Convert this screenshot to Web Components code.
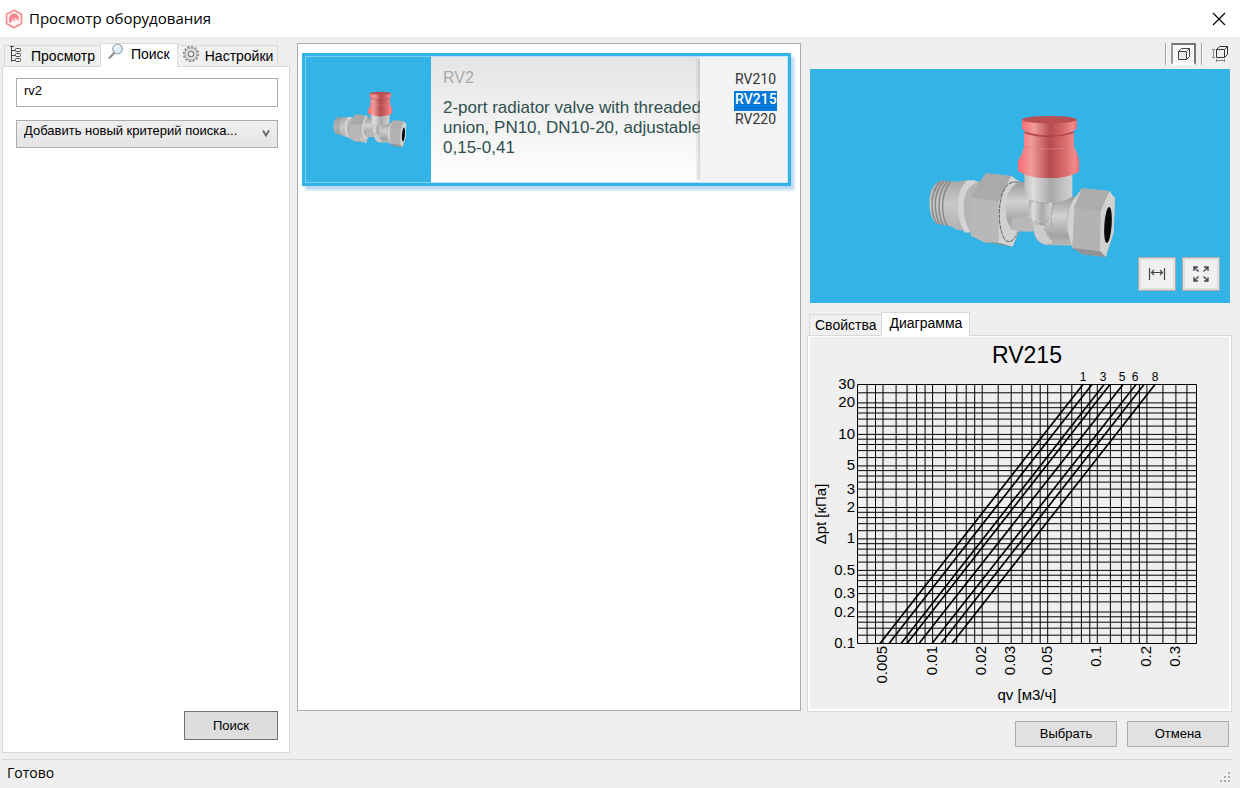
<!DOCTYPE html>
<html lang="ru">
<head>
<meta charset="utf-8">
<title>Просмотр оборудования</title>
<style>
  body { margin: 0; font: 14px/20px "Liberation Sans", Arial, sans-serif; color: #000; background: #efefef; }
</style>
</head>
<body>
<equipment-browser></equipment-browser>

<template id="t-browser">
  <style>
    :host { display: flex; flex-direction: column; min-height: 100vh; }
    main { flex: 1; display: grid; grid-template-columns: 288px minmax(0, 1fr) 425px; column-gap: 6px; padding: 6px 8px 6px 2px; }
    .search { display: flex; flex-direction: column; flex: 1; padding: 11px 11px 12px 13px; }
    .search input, .search select {
      box-sizing: border-box; width: 100%; height: 29px; margin: 0 0 13px; padding: 0 7px 5px; border: 1px solid #abadb3;
      font: 13px/20px "Liberation Sans", Arial, sans-serif; color: #000; border-radius: 0; outline: 0; background: #fff; }
    .search select { appearance: none; height: 28px; padding: 0 7px 6px; border-color: #acacac; background: linear-gradient(#efefef, #e4e4e4); }
    .drop { display: grid; }
    .drop > * { grid-area: 1 / 1; }
    .drop svg { justify-self: end; margin: 9px 8px 0 0; pointer-events: none; }
    dialog-button.find { align-self: flex-end; margin-top: auto; --w: 94px; --h: 29px; --line: #707070; --fill: #ddd; }
    .results { box-sizing: border-box; margin: 0 0 42px 1px; padding: 9px 9px 9px 4px; background: #fff; border: 1px solid #abadb3; }
    .side { display: flex; flex-direction: column; }
    view-tools { align-self: flex-end; }
    model-preview { margin: 0 2px 9px 3px; }
    .chart { background: #efefef; border: 2px solid #fff; border-width: 1px 2px 2px; flex: 1; }
    .actions { display: flex; justify-content: flex-end; gap: 10px; padding: 9px 3px 6px 0; --w: 102px; --h: 26px; }
    tab-box.detail { flex: 1; }
  </style>
  <title-bar>Просмотр оборудования</title-bar>
  <main>
    <tab-box active="1">
      <span slot="tab0"><svg width="14" height="18" viewBox="0 0 14 18" fill="none" stroke="#444"><path d="M1.500 1v15.500M0 1.500h4M2 5.500h3M2 10.500h3M2 15.500h3"/><rect x="5.500" y="3.500" width="5" height="3" rx="1"/><rect x="5.500" y="8.500" width="5" height="3" rx="1"/><rect x="5.500" y="13.500" width="5" height="3" rx="1"/></svg></span>
      <span slot="label0">Просмотр</span>
      <span slot="tab1"><svg width="16" height="17" viewBox="0 0 16 17"><path d="M1 15.500L6.500 9.500" stroke="#8b8b8b" stroke-width="2.200"/><circle cx="9.500" cy="6" r="4.800" fill="#d8ecfa" stroke="#a2a9b0" stroke-width="1.300"/><path d="M7 6a3 3 0 0 1 4-3" stroke="#fff" stroke-width="1.500" fill="none"/></svg></span>
      <span slot="label1">Поиск</span>
      <span slot="tab2"><svg width="18" height="18" viewBox="0 0 18 18"><circle cx="9" cy="9" r="7.300" fill="#e6e6e6" stroke="#858585" stroke-width="1.600" stroke-dasharray="2.200 1.600"/><circle cx="9" cy="9" r="6" fill="#e3e3e3" stroke="#a4a4a4"/><circle cx="9" cy="9" r="2.700" fill="#f6f6f6" stroke="#858585" stroke-width="1.300"/></svg></span>
      <span slot="label2">Настройки</span>
      <div class="search">
        <input type="text" value="rv2" aria-label="Текст для поиска">
        <div class="drop">
          <select aria-label="Критерий поиска"><option>Добавить новый критерий поиска...</option></select>
          <svg width="8" height="9" viewBox="0 0 8 9"><path d="M1 1.500L4 6.500L7 1.500" fill="none" stroke="#666" stroke-width="1.800"/></svg>
        </div>
        <dialog-button class="find">Поиск</dialog-button>
      </div>
    </tab-box>
    <div class="results">
      <product-card>
        <span slot="name">RV2</span>
        <span slot="text">2-port radiator valve with threaded<br>union, PN10, DN10-20, adjustable<br>0,15-0,41</span>
      </product-card>
    </div>
    <div class="side">
      <view-tools></view-tools>
      <model-preview></model-preview>
      <tab-box class="detail" active="1">
        <span slot="label0">Свойства</span>
        <span slot="label1">Диаграмма</span>
        <div class="chart"><pressure-chart></pressure-chart></div>
      </tab-box>
      <div class="actions">
        <dialog-button>Выбрать</dialog-button>
        <dialog-button>Отмена</dialog-button>
      </div>
    </div>
  </main>
  <status-bar>Готово</status-bar>
</template>

<template id="t-title">
  <style>
    :host { display: flex; align-items: center; height: 37px; padding: 0 14px 0 5px; background: #fff; font: 15px/20px "Open Sans", "Noto Sans", sans-serif; }
    span { flex: 1; padding: 0 0 2px 6px; }
    button { display: flex; border: 0; background: none; padding: 0; }
  </style>
  <svg width="18" height="20" viewBox="0 0 18 20"><path d="M9 1.300L16.500 5.300V14.500L9 18.700L1.500 14.500V5.300Z" fill="#fff3f3" stroke="#f58e92" stroke-width="1.700" stroke-linejoin="round"/><path d="M4 14V9.500A5 5 0 0 1 14 9.500V10.500L12 11A2.600 2.600 0 0 0 9.500 9L10 12H8.500L8 9.500Q6.500 11 6.500 13Z" fill="#f4888d"/></svg>
  <span><slot></slot></span>
  <button aria-label="Закрыть"><svg width="14" height="14" viewBox="0 0 14 14"><path d="M1 1L13 13M13 1L1 13" stroke="#000" stroke-width="1.200"/></svg></button>
</template>

<template id="t-button">
  <style>
    :host { display: block; }
    button { box-sizing: border-box; width: var(--w); height: var(--h); padding: 0; border: 1px solid var(--line, #adadad); background: var(--fill, #e1e1e1); font: 13px/20px "Liberation Sans", Arial, sans-serif; color: #000; }
  </style>
  <button type="button"><slot></slot></button>
</template>

<template id="t-status">
  <style>
    :host { display: flex; justify-content: space-between; align-items: center; height: 28px; margin: 0 8px 0 2px; padding-left: 5px; border-top: 1px solid #d7d7d7; font: 14px/20px "Open Sans", "Noto Sans", sans-serif; }
    svg { margin-top: 8px; }
    span { padding-bottom: 2px; }
  </style>
  <span><slot></slot></span>
  <svg width="12" height="12" viewBox="0 0 12 12" fill="#aaa"><path d="M8 0h2v2H8zM4 4h2v2H4zM8 4h2v2H8zM0 8h2v2H0zM4 8h2v2H4zM8 8h2v2H8z"/></svg>
</template>

<template id="t-tools">
  <style>
    :host { display: flex; align-items: flex-start; height: 26px; }
    i { width: 1px; height: 22px; background: #a0a0a0; box-shadow: 1px 0 #fff; }
    button { display: grid; place-items: center; box-sizing: border-box; width: 25px; height: 22px; margin: 0 5px; padding: 0; border: 1px solid #efefef; background: none; }
    button:last-child { margin-right: 0; }
    button.on { border: 2px solid; border-color: #777 #777 #fff #999; background: #f7f7f7; }
  </style>
  <i></i>
  <button class="on" aria-label="Модель"><svg width="14" height="14" viewBox="0 0 14 14" fill="#fff" stroke="#444"><path d="M1.500 4.500L4.500 1.500H12.500V9.500L9.500 12.500H1.500Z"/><path d="M1.500 4.500H9.500V12.500H1.500Z" fill="#e8e8e8"/><path d="M9.500 4.500L12.500 1.500"/></svg></button>
  <i></i>
  <button aria-label="Размеры"><svg width="18" height="18" viewBox="0 0 18 18" fill="none" stroke="#333"><path d="M5.500 4.500L8.500 1.500H16.500V9.500L13.500 12.500H5.500ZM5.500 4.500H13.500V12.500M13.500 4.500L16.500 1.500"/><path stroke="#888" d="M2.500 4v9M1 4.500h3M1 12.500h3M5 15.500h9M5.500 14v3M13.500 14v3"/></svg></button>
</template>

<template id="t-valve">
  <style>:host { display: block; } svg { display: block; width: 100%; }</style>
  <svg viewBox="0 0 720 510">
    <defs>
      <linearGradient id="red"><stop offset="0" stop-color="#f96d70"/><stop offset=".22" stop-color="#f09b9c"/><stop offset=".52" stop-color="#b54b4d"/><stop offset=".78" stop-color="#dc6d6f"/><stop offset=".93" stop-color="#f08b8c"/><stop offset="1" stop-color="#ff6569"/></linearGradient>
      <linearGradient id="neck"><stop offset="0" stop-color="#bdbdbd"/><stop offset=".18" stop-color="#dedede"/><stop offset=".55" stop-color="#a9a9a9"/><stop offset=".95" stop-color="#cfcfcf"/></linearGradient>
      <linearGradient id="pipe" x2="0" y2="1"><stop offset="0" stop-color="#989898"/><stop offset=".4" stop-color="#d2d2d2"/><stop offset=".8" stop-color="#a3a3a3"/><stop offset="1" stop-color="#b8b8b8"/></linearGradient>
      <linearGradient id="collar" x2="0" y2="1"><stop offset="0" stop-color="#a8a8a8"/><stop offset=".45" stop-color="#c8c8c8"/><stop offset="1" stop-color="#b0b0b0"/></linearGradient>
    </defs>
    <path d="M121 239Q88 253 88 306Q89 350 107 367L150 376L178 388V244L135 239Z" fill="url(#collar)"/>
    <g fill="none" stroke="#858585" stroke-width="4"><path d="M122 240Q94 270 96 315Q98 350 111 368M132 240Q104 270 106 315Q108 353 121 371M142 241Q116 270 117 317Q118 357 132 373M151 242Q127 274 128 318Q129 357 142 374"/></g>
    <path d="M160 243L204 238L235 242L241 250V394L213 395L165 384Q140 365 140 310Q141 265 160 243Z" fill="url(#collar)"/>
    <path d="M185 241L220 237L235 242Q192 259 191 310Q190 360 211 394L195 395Q172 360 174 310Q175 260 200 241Z" fill="#d4d4d4"/>
    <path d="M235 242L241 246V400L214 394Q190 365 191 310Q195 262 235 242Z" fill="#b5b5b5"/>
    <path d="M258 216L333 224L358 242L300 304L300 427L257 425L213 404V290L236 246Z" fill="#aaa"/>
    <path d="M213 290L300 302V427L257 425L213 404Z" fill="#b8b8b8"/>
    <path d="M333 224L358 242V391Q348 410 338 437L296 427V302Z" fill="#d2d2d2"/>
    <path d="M257 423L300 426L338 437Z" fill="#8f8f8f"/>
    <path d="M355 244Q318 236 304 288Q291 345 305 395Q318 436 340 415Q350 405 355 391" fill="#d0d0d0" stroke="#444" stroke-width="2.500" stroke-dasharray="13 3"/>
    <path d="M358 243L398 242V390L356 391L333 384L321 359Q313 320 320 286Q332 255 358 243Z" fill="url(#pipe)"/>
    <path d="M336 354L400 340V392L355 391L333 384Z" fill="#b8b8b8"/>
    <path d="M388 290H500L530 285V434L438 432Q405 425 401 387L388 354Z" fill="url(#pipe)"/>
    <path d="M373 218H517V287Q495 301 458 307L445 310Q395 306 373 289Z" fill="url(#neck)"/>
    <path d="M393 298Q420 310 456 303L450 360L430 381L388 354Z" fill="url(#neck)"/>
    <path d="M400 370L434 374Q440 405 462 424L438 431Q405 424 401 387Z" fill="#ccc"/>
    <path d="M389 354L431 374L450 349M394 298Q425 312 458 301M433 381Q442 411 465 427M465 306Q447 337 457 380" fill="none" stroke="#888" stroke-width="2" stroke-dasharray="10 5"/>
    <path d="M546 262L628 270L645 292L641 394L617 468L548 460L517 441L502 390V340L518 300Z" fill="#b3b3b3"/>
    <path d="M546 262L518 300Q499 340 503 390L517 441L523 320Z" fill="#d2d2d2"/>
    <path d="M546 262L628 270L602 331L521 320Z" fill="#adadad"/>
    <path d="M628 270L645 292L641 394L617 468L600 450L602 331Z" fill="#d1d1d1"/>
    <path d="M517 441L600 451L617 468L548 460Z" fill="#929292"/>
    <ellipse cx="624" cy="372" rx="11" ry="54" transform="rotate(4 624 372)" fill="#080808"/>
    <path d="M372 91H522V137Q535 160 537 181V212Q500 232 442 231Q380 230 354 209V180Q368 158 372 137Z" fill="url(#red)"/>
    <path d="M354 178Q400 194 445 194Q500 194 537 178V212Q500 232 442 231Q380 230 354 209Z" fill="url(#red)"/>
    <path d="M366 55H530V84Q500 100 448 104Q390 101 366 84Z" fill="url(#red)"/>
    <path d="M374 94Q448 118 521 94" fill="none" stroke="#b14648" stroke-width="5"/>
    <path d="M366 86L372 93V99L362 88ZM530 86L522 93V99L534 88Z" fill="#33b3e6"/>
    <path d="M372 137Q448 151 522 137" fill="none" stroke="#d88485" stroke-width="2"/>
    <ellipse cx="448" cy="56" rx="82" ry="11" fill="#b85052"/>
  </svg>
</template>

<template id="t-preview">
  <style>
    :host { display: grid; place-items: center; position: relative; height: 234px; background: #33b3e6; }
    valve-model { width: 240px; }
    div { position: absolute; right: 10px; bottom: 12px; display: flex; gap: 6px; }
    button { display: grid; place-items: center; box-sizing: border-box; width: 38px; height: 34px; padding: 0; background: #f0f0f0; border: 1px solid #aaa; box-shadow: inset 0 0 0 2px #dfdfdf; }
  </style>
  <valve-model></valve-model>
  <div>
    <button aria-label="Измерить"><svg width="18" height="14" viewBox="0 0 18 14" fill="none" stroke="#3d444c" stroke-width="1.200"><path d="M1.500 1v12M16.500 1v12M4 5.500h10M6 3L3.500 5.500L6 8M12 3l2.500 2.500L12 8"/></svg></button>
    <button aria-label="Развернуть"><svg width="16" height="16" viewBox="0 0 16 16" fill="none" stroke="#3d444c" stroke-width="1.300"><path d="M1 5V1h4M1.500 1.500L5.500 5.500M11 1h4v4M14.500 1.500L10.500 5.500M1 11v4h4M1.500 14.500L5.500 10.500M15 11v4h-4M14.500 14.500L10.500 10.500"/></svg></button>
  </div>
</template>

<template id="t-card">
  <style>
    :host { display: flex; box-sizing: border-box; height: 133px; border: 3px solid #33b3e6; box-shadow: 3px 4px 3px #b9d6f0; }
    .pic { flex: none; display: grid; place-items: center; box-sizing: border-box; width: 126px; background: #33b3e6; border: 1px solid #7accee; border-right: 0; }
    valve-model { width: 94px; }
    .text { flex: 1; min-width: 0; overflow: hidden; position: relative; padding: 11px 0 0 12px; white-space: nowrap; background: linear-gradient(#e4e4e4, #fff); border: 1px solid #b5e0f2; border-width: 1px 0; }
    .text::after { content: ""; position: absolute; inset: 2px 0 2px auto; width: 5px; background: linear-gradient(90deg, #9990, #9996); }
    h2 { margin: 0 0 10px; font: 16px/20px "Liberation Sans", Arial, sans-serif; color: #a9a9a9; }
    p { margin: 0; font: 17px/20px "Liberation Sans", Arial, sans-serif; color: #2f4f4f; }
    .list { flex: none; box-sizing: border-box; width: 88px; background: #f3f3f3; border: 1px solid #c5e8f5; border-left: 0; padding: 14px 0 0 34px; }
    select { display: block; width: 43px; height: 60px; padding: 0; border: 0; border-radius: 0; background: none; overflow: hidden; outline: 0; scrollbar-width: none; font: 14px/12px Roboto, sans-serif; color: #333; }
    option { min-height: 0; box-sizing: border-box; height: 20px; padding: 0 0 8px 1px; font: 14px/12px Roboto, sans-serif; }
    option:checked { background: #0078d7 linear-gradient(#0078d7, #0078d7); color: #fff; font-weight: 500; -webkit-text-fill-color: #fff; }
  </style>
  <div class="pic"><valve-model></valve-model></div>
  <div class="text"><h2><slot name="name"></slot></h2><p><slot name="text"></slot></p></div>
  <div class="list"><select size="3" aria-label="Модель"><option>RV210</option><option selected>RV215</option><option>RV220</option></select></div>
</template>

<script>
  const define = (name, id) => customElements.define(name, class extends HTMLElement {
    constructor() {
      super();
      this.attachShadow({ mode: "open" }).append(document.getElementById(id).content.cloneNode(true));
    }
  });

  // Tab strip with a bordered page under it; labels and icons come in through slots.
  customElements.define("tab-box", class extends HTMLElement {
    connectedCallback() {
      if (this.shadowRoot) return;
      const active = Number(this.getAttribute("active"));
      const labels = [...this.children].filter(c => c.slot.startsWith("label"));
      const tabs = labels.map((c, i) => {
        const icon = [...this.children].some(k => k.slot === "tab" + i);
        return `<button role="tab" aria-selected="${i === active}">${icon ? `<slot name="tab${i}"></slot>` : ""}<slot name="label${i}"></slot></button>`;
      }).join("");
      this.attachShadow({ mode: "open" }).innerHTML = `
        <style>
          :host { display: flex; flex-direction: column; }
          [role=tablist] { display: flex; align-items: flex-end; height: 23px; padding-left: 2px; }
          button { display: flex; align-items: center; gap: 7px; box-sizing: border-box; height: 21px; padding: 0 5px; border: 1px solid #d9d9d9; border-bottom: 0; background: #f0f0f0; font: 14px/20px "Liberation Sans", Arial, sans-serif; color: #000; margin-left: -1px; }
          button:first-child { margin-left: 0; }
          button:last-child:nth-child(3) { padding: 0 4px; gap: 5px; }
          button[aria-selected=true] { height: 24px; margin-bottom: -1px; padding: 0 7px 3px; background: #fff; position: relative; }
          slot[name^=tab] { display: block; }
          ::slotted(*) { display: block; }
          ::slotted(.search), ::slotted(.chart) { display: flex; }
          .page { flex: 1; display: flex; flex-direction: column; background: #fff; border: 1px solid #d9d9d9; }
        </style>
        <div role="tablist">${tabs}</div>
        <div class="page"><slot></slot></div>`;
    }
  });

  // Log-log pressure drop diagram.
  customElements.define("pressure-chart", class extends HTMLElement {
    connectedCallback() {
      const L = 48.5, R = 387.5, T = 47.5, B = 306.5;
      const x = v => L + (R - L) * Math.log(v / 0.0035) / Math.log(0.4 / 0.0035);
      const y = v => B - (B - T) * Math.log(v / 0.1) / Math.log(300);
      const steps = [1, 1.2, 1.4, 1.6, 1.8, 2, 2.5, 3, 3.5, 4, 4.5, 5, 6, 7, 8, 9];
      let grid = "";
      for (const d of [0.001, 0.01, 0.1, 1, 10]) for (const s of steps) {
        const v = d * s;
        if (v > 0.0036 && v < 0.39) grid += `M${x(v).toFixed(1)} ${T}V${B}`;
        if (v > 0.11 && v < 29) grid += `M${L} ${y(v).toFixed(1)}H${R}`;
      }
      const curves = [[71, 274], [80, 283], [92, 295], [98, 301], [110, 314], [123, 327], [132, 335], [143, 346]]
        .map(([a, b]) => `M${a} ${B}L${b} ${T}`).join("");
      const ys = [30, 20, 10, 5, 3, 2, 1, 0.5, 0.3, 0.2, 0.1]
        .map(v => `<text x="46" y="${Math.round(y(v) + 4.5)}" text-anchor="end">${v}</text>`).join("");
      const xs = [0.005, 0.01, 0.02, 0.03, 0.05, 0.1, 0.2, 0.3]
        .map(v => `<text transform="translate(${Math.round(x(v) + 4)} 309) rotate(-90)" text-anchor="end">${v}</text>`).join("");
      const top = [[1, 274], [3, 294], [5, 313], [6, 326], [8, 346]]
        .map(([n, p]) => `<text x="${p}" y="44" text-anchor="middle" font-size="12">${n}</text>`).join("");
      this.attachShadow({ mode: "open" }).innerHTML = `
        <style>:host { display: block; flex: 1; } svg { display: block; width: 100%; } text { font-family: "Liberation Sans", Arial, sans-serif; }</style>
        <svg viewBox="1 0 419 371" font-size="15" fill="#000">
          <text x="218" y="26" text-anchor="middle" font-size="23">RV215</text>${top}${ys}${xs}
          <text x="218" y="363" text-anchor="middle">qv [м3/ч]</text>
          <text transform="translate(17 177) rotate(-90)" text-anchor="middle">Δpt [кПа]</text>
          <path d="${grid}" fill="none" stroke="#000"/>
          <path d="M${L} ${T}H${R}V${B}H${L}Z" fill="none" stroke="#000"/>
          <path d="${curves}" fill="none" stroke="#000" stroke-width="1.700"/>
        </svg>`;
    }
  });

  define("title-bar", "t-title");
  define("dialog-button", "t-button");
  define("status-bar", "t-status");
  define("view-tools", "t-tools");
  define("valve-model", "t-valve");
  define("model-preview", "t-preview");
  define("product-card", "t-card");
  define("equipment-browser", "t-browser");
</script>
</body>
</html>
